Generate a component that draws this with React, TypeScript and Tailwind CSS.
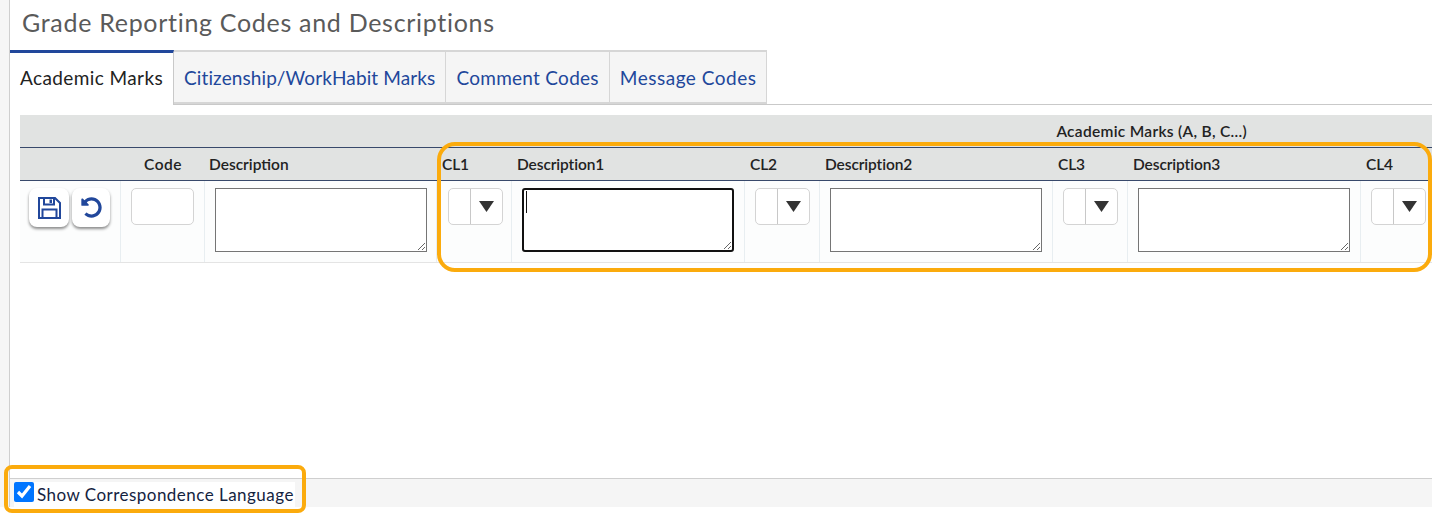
import React from 'react';
import { FaUndoAlt } from 'react-icons/fa';

const tabs = [
  { label: 'Citizenship/WorkHabit Marks', cls: 'tracking-[0.12px]' },
  { label: 'Comment Codes', cls: 'tracking-[0.27px]' },
  { label: 'Message Codes', cls: 'tracking-[0.5px]' },
];

function ComboBox() {
  return (
    <div className="flex h-[37px] w-[55px] rounded-[5px] border border-[#d4d4d4] bg-white">
      <div className="w-[22px] border-r border-[#c8c8c8]" />
      <div className="flex flex-1 items-center justify-center">
        <svg width="15" height="11" viewBox="0 0 15 11">
          <path d="M0 0h15L7.5 11z" fill="#333" />
        </svg>
      </div>
    </div>
  );
}

function DescBox({ active }: { active?: boolean }) {
  return (
    <div className="relative h-[64px] w-[212px]">
      <textarea
        className={
          active
            ? 'block h-[64px] w-[212px] rounded-[3px] border-2 border-[#111] bg-white outline-none'
            : 'block h-[64px] w-[212px] border border-[#757575] bg-white outline-none'
        }
      />
      {active && <div className="absolute left-[4px] top-[3px] h-[22px] w-px bg-[#111]" />}
    </div>
  );
}

function HeadCell({ label, center }: { label: string; center?: boolean }) {
  return (
    <div className={center ? 'text-center' : 'pl-[5px]'}>
      <span className={center ? 'text-[15.5px] font-semibold tracking-[0.5px] text-[#222]' : 'text-[15.5px] font-semibold tracking-[-0.1px] text-[#222]'}>
        {label}
      </span>
    </div>
  );
}

export default function App() {
  const grid = 'grid grid-cols-[101px_84px_232px_75px_233px_75px_233px_75px_233px_71px] w-[1412px]';

  return (
    <div className="relative h-[514px] w-[1432px] overflow-hidden bg-white font-['Lato',sans-serif]">
      <div className="flex h-[507px]">
        {/* left strip */}
        <div className="w-[10px] shrink-0 border-r border-[#cfcfcf] bg-[#f6f6f6]" />

        <div className="flex min-w-0 flex-1 flex-col">
          {/* Title */}
          <div className="flex h-[50px] items-center pb-[5px] pl-[12px]">
            <h1 className="text-[25px] tracking-[0.7px] text-[#5a5a5a]">Grade Reporting Codes and Descriptions</h1>
          </div>

          {/* Tabs */}
          <div className="flex h-[55px] border-b border-[#c9c9c9]">
            <div className="flex h-[55px] w-[164px] items-center border-t-[3px] border-r border-[#21479b] border-r-[#c9c9c9] bg-white pb-[2px] pl-[10px] text-[19px] tracking-[0.4px] text-[#222]">
              Academic Marks
            </div>
            {tabs.map((t) => (
              <div
                key={t.label}
                className={`flex h-[54px] items-center border-t-2 border-r border-b-2 border-[#d6d6d6] bg-[#f5f5f5] px-[10px] pt-[3px] text-[19px] text-[#21479b] ${t.cls}`}
              >
                {t.label}
              </div>
            ))}
          </div>

          {/* Table */}
          <div className="mt-[10px] flex-1 pl-[10px]">
            <div className="flex h-[32px] w-[1412px] items-center justify-end bg-[#e1e3e2] pr-[185px] pt-[2px]">
              <span className="text-[15.5px] font-semibold tracking-[0.3px] text-[#222]">Academic Marks (A, B, C...)</span>
            </div>
            <div className={`${grid} h-[34px] items-center border-y border-[#38496b] bg-[#e1e3e2] pt-[1px]`}>
              <div />
              <HeadCell label="Code" center />
              <div className="pl-[4px]">
                <span className="text-[15.5px] font-semibold text-[#222]">Description</span>
              </div>
              <HeadCell label="CL1" />
              <HeadCell label="Description1" />
              <HeadCell label="CL2" />
              <HeadCell label="Description2" />
              <HeadCell label="CL3" />
              <HeadCell label="Description3" />
              <HeadCell label="CL4" />
            </div>
            <div className={`${grid} h-[82px] border-b border-[#e4e4e4] bg-[#fcfdfd]`}>
              <div className="flex gap-[3px] border-r border-[#e8eef1] pl-[9px] pt-[7px]">
                <button className="flex h-[39px] w-[40px] items-center justify-center rounded-[8px] bg-white text-[#21479b] shadow-[0_2px_3px_rgba(0,0,0,0.45)]">
                  <svg width="23" height="22" viewBox="0 0 23 22" fill="none">
                    <path d="M1 1h16l5 5v15H1z" stroke="#21479b" strokeWidth="2" />
                    <path d="M6 1v6.5h10V1" stroke="#21479b" strokeWidth="2" />
                    <path d="M11.5 2.5h2.5v3.5h-2.5z" fill="#21479b" />
                    <path d="M4.5 21v-8.5h14V21" stroke="#21479b" strokeWidth="2" />
                  </svg>
                </button>
                <button className="flex h-[39px] w-[38px] items-center justify-center rounded-[8px] bg-white text-[#21479b] shadow-[0_2px_3px_rgba(0,0,0,0.45)]">
                  <FaUndoAlt size={21} />
                </button>
              </div>
              <div className="border-r border-[#e8eef1] pl-[10px] pt-[7px]">
                <div className="h-[37px] w-[63px] rounded-[5px] border border-[#d4d4d4] bg-white" />
              </div>
              {[false, true, false, false].map((active, i) => (
                <React.Fragment key={i}>
                  <div className="border-r border-[#e8eef1] pl-[10px] pt-[7px]">
                    <DescBox active={active} />
                  </div>
                  <div
                    className={
                      i === 0
                        ? 'border-r border-[#e8eef1] pl-[11px] pt-[7px]'
                        : i === 3
                          ? 'pl-[10px] pt-[7px]'
                          : 'border-r border-[#e8eef1] pl-[10px] pt-[7px]'
                    }
                  >
                    <ComboBox />
                  </div>
                </React.Fragment>
              ))}
            </div>
          </div>

          {/* Footer */}
          <div className="flex h-[29px] items-end border-t border-[#cfcfcf] bg-[#f5f5f5]">
            <label className="ml-[4px] flex h-[25px] w-[281px] items-center bg-white text-[17px] tracking-[0.47px] text-[#14233f]">
              <input type="checkbox" defaultChecked className="mb-[5px] h-[20px] w-[20px] shrink-0" />
              <span className="ml-[3px]">Show Correspondence Language</span>
            </label>
          </div>
        </div>
      </div>

      {/* Orange annotations */}
      <div className="absolute left-[437px] top-[142px] h-[130px] w-[995px] rounded-[18px] border-[4px] border-[#fbab0d]" />
      <div className="absolute left-[4px] top-[465px] h-[48px] w-[302px] rounded-[8px] border-[4px] border-[#fbab0d]" />
    </div>
  );
}
